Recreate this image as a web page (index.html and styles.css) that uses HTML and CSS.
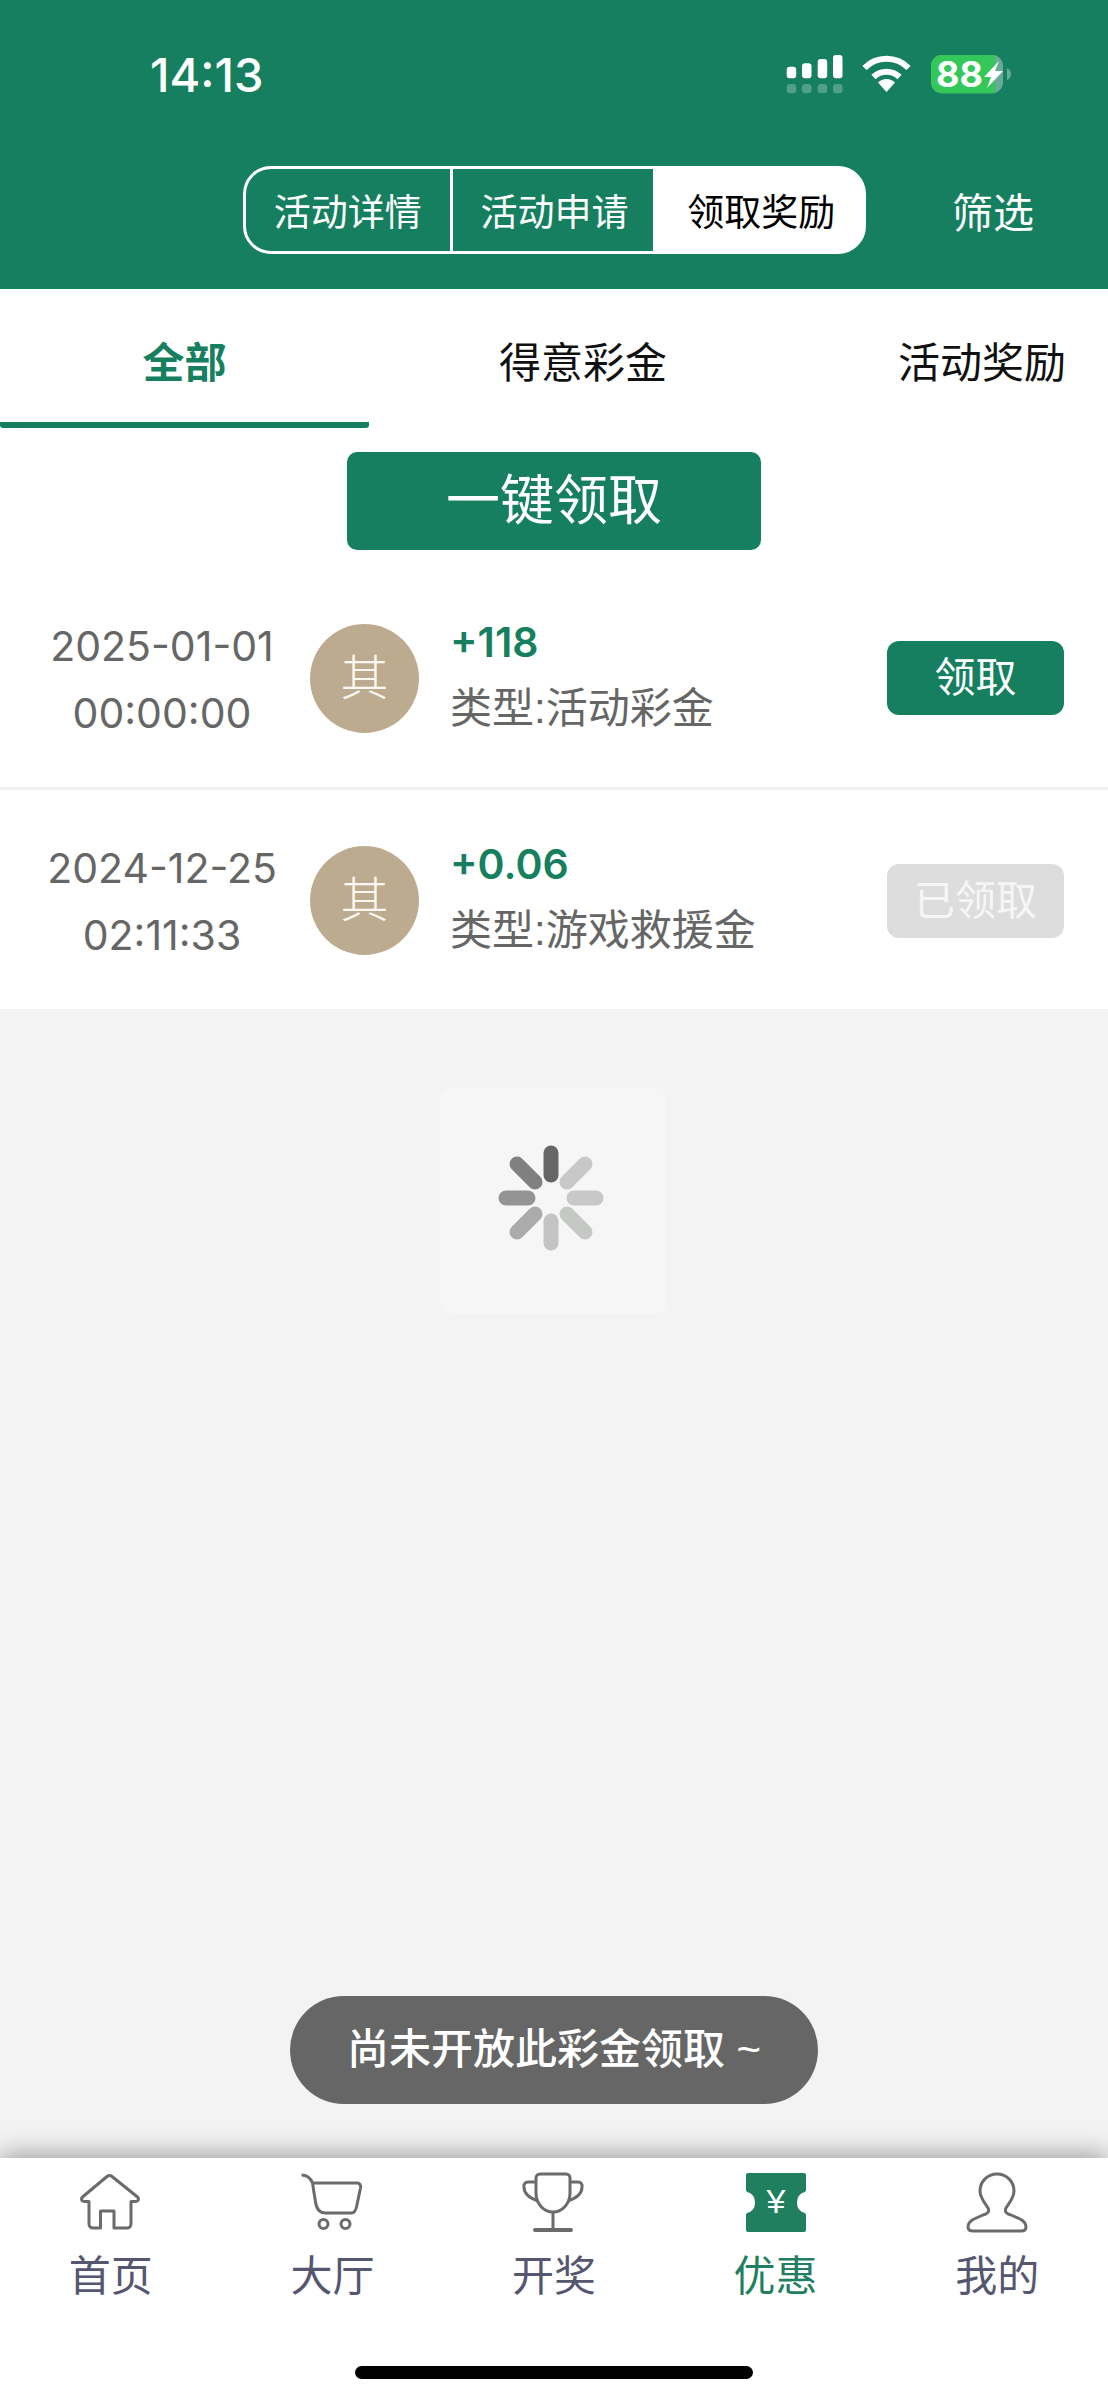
FILE: index.html
```html
<!DOCTYPE html>
<html lang="en">

<head>
    <meta charset="UTF-8">
    <title>领取奖励</title>
    <link rel="stylesheet" href="styles.css">
</head>

<body>
    <div class="page">
        <div class="header">
            <div class="status">
                <span class="time">14:13</span>
                <svg class="status-icons" viewBox="0 0 240 50" width="240" height="50">
                    <g fill="#fff">
                        <rect x="6.7" y="16.7" width="9.5" height="11.6" rx="3"></rect>
                        <rect x="22" y="13.3" width="9.5" height="15" rx="3"></rect>
                        <rect x="37.7" y="9" width="9.5" height="19.3" rx="3"></rect>
                        <rect x="53" y="5" width="9.5" height="23.3" rx="3"></rect>
                    </g>
                    <g fill="#fff" opacity="0.25">
                        <rect x="6.7" y="34" width="9.5" height="9.3" rx="3"></rect>
                        <rect x="22" y="34" width="9.5" height="9.3" rx="3"></rect>
                        <rect x="37.7" y="34" width="9.5" height="9.3" rx="3"></rect>
                        <rect x="53" y="34" width="9.5" height="9.3" rx="3"></rect>
                    </g>
                    <path d="M84.5 18A31 31 0 0 1 128.5 18M93.5 27A18.5 18.5 0 0 1 119.5 27" fill="none" stroke="#fff" stroke-width="6"></path>
                    <path d="M106.5 42L98 32.5A12 12 0 0 1 115 32.5Z" fill="#fff"></path>
                    <rect x="151" y="5" width="72" height="38.3" rx="11" fill="#fff" opacity="0.35"></rect>
                    <path d="M162 5H215V43.3H162A11 11 0 0 1 151 32.3V16A11 11 0 0 1 162 5Z" fill="#34c759"></path>
                    <path d="M227 18Q231 20 231 24Q231 28 227 30Z" fill="#fff" opacity="0.35"></path>
                    <text class="battery-num" x="156" y="37">88</text>
                    <path d="M219 11L204 27H211L207 38L223 21H215Z" fill="#fff"></path>
                </svg>
            </div>
            <div class="head-row">
                <div class="segment">
                    <div class="seg">活动详情</div>
                    <div class="seg">活动申请</div>
                    <div class="seg on">领取奖励</div>
                </div>
                <div class="filter">筛选</div>
            </div>
        </div>

        <div class="main">
            <div class="white">
                <div class="tabs">
                    <div class="tab tab1 on">全部</div>
                    <div class="tab tab2">得意彩金</div>
                    <div class="tab tab3">活动奖励</div>
                </div>
                <div class="claim-all">一键领取</div>
                <div class="row">
                    <div class="date">2025-01-01<br>00:00:00</div>
                    <div class="avatar">其</div>
                    <div class="info">
                        <div class="amount">+118</div>
                        <div class="type">类型:活动彩金</div>
                    </div>
                    <div class="btn">领取</div>
                </div>
                <div class="row last">
                    <div class="date">2024-12-25<br>02:11:33</div>
                    <div class="avatar">其</div>
                    <div class="info">
                        <div class="amount">+0.06</div>
                        <div class="type">类型:游戏救援金</div>
                    </div>
                    <div class="btn done">已领取</div>
                </div>
            </div>

            <div class="loading">
                <svg viewBox="-57 -57 120 120" width="120" height="120" fill="none" stroke-width="15" stroke-linecap="round">
                    <path d="M0 -45V-23" stroke="#666"></path>
                    <path d="M-34 -34L-16 -16" stroke="#808080"></path>
                    <path d="M-45 0H-23" stroke="#949494"></path>
                    <path d="M-34 34L-16 16" stroke="#ababab"></path>
                    <path d="M0 45V23" stroke="#c4c4c4"></path>
                    <path d="M34 34L16 16" stroke="#c6c8c6"></path>
                    <path d="M45 0H23" stroke="#c8c8c8"></path>
                    <path d="M34 -34L16 -16" stroke="#c8c8c8"></path>
                </svg>
            </div>

            <div class="toast">尚未开放此彩金领取 ~</div>
        </div>

        <div class="tabbar">
            <div class="item">
                <svg viewBox="1.500 0 70 64" width="70" height="64" class="ico">
                    <path d="M32.5 6.5a4 4 0 0 1 5 0L63 27a2.5 2.5 0 0 1-1.5 4.5H56.5V54a4 4 0 0 1-4 4H39.5V41H26V58H18.5a4 4 0 0 1-4-4V31.5H9.5A2.5 2.5 0 0 1 8 27Z"></path>
                </svg>
                <span>首页</span>
            </div>
            <div class="item">
                <svg viewBox="1.500 0 70 64" width="70" height="64" class="ico">
                    <path d="M6 5C12 5 15 8 17 13L20 32C21 39 24 43 30 43H56C59 43 60 41 61 37L65 18C65.500 15 64 13 62 13H17"></path>
                    <circle cx="28" cy="54" r="4.500"></circle>
                    <circle cx="50" cy="54" r="4.500"></circle>
                </svg>
                <span>大厅</span>
            </div>
            <div class="item">
                <svg viewBox="1 0 70 64" width="70" height="64" class="ico">
                    <path d="M22 4H48a4 4 0 0 1 4 4V23a17 19 0 0 1-34 0V8a4 4 0 0 1 4-4Z"></path>
                    <path d="M18 12H10a4 4 0 0 0-4 5C6 24 11 28 20 31M52 12H60a4 4 0 0 1 4 5C64 24 59 28 50 31M35 42V59"></path>
                    <path d="M17 60H53" stroke-width="4" stroke-linecap="round"></path>
                </svg>
                <span>开奖</span>
            </div>
            <div class="item on">
                <svg viewBox="0 0 70 64" width="70" height="64">
                    <path d="M7 3H63a2 2 0 0 1 2 2V20Q65 22 61 23Q56 26 56 32.500Q56 39 61 42Q65 43 65 45V60a2 2 0 0 1-2 2H7a2 2 0 0 1-2-2V45Q5 43 9 42Q14 39 14 32.500Q14 26 9 23Q5 22 5 20V5a2 2 0 0 1 2-2Z" fill="#1f7f5f"></path>
                    <text class="yen" x="35" y="43">¥</text>
                </svg>
                <span>优惠</span>
            </div>
            <div class="item">
                <svg viewBox="0 0 70 64" width="70" height="64" class="ico">
                    <path d="M35 4C45 4 52 12 52 21C52 28 47 33 44 38C42 42 45 44 49 45L58 49C62 51 64 54 64 57C64 60 62 61 59 61H11C8 61 6 60 6 57C6 54 8 51 12 49L21 45C25 44 28 42 26 38C23 33 18 28 18 21C18 12 25 4 35 4Z"></path>
                </svg>
                <span>我的</span>
            </div>
            <div class="home-bar"></div>
        </div>
    </div>
</body>

</html>
```

FILE: styles.css
```css
* {
    margin: 0;
    padding: 0;
    box-sizing: border-box;
}

html,
body {
    height: 100%;
    overflow: hidden;
}

body {
    font-family: "Liberation Sans", "Noto Sans CJK SC", sans-serif;
    background: #f3f3f3;
}

.page {
    height: 2400px;
    display: flex;
    flex-direction: column;
}

/* header */
.header {
    height: 289px;
    background: #167f5f;
    color: #fff;
    flex: none;
}

.status {
    height: 166px;
    display: flex;
    justify-content: space-between;
    padding: 50px 88px 0 150px;
}

.time {
    font-family: Inter, sans-serif;
    font-weight: 500;
    font-size: 47px;
    line-height: 50px;
}

.status-icons {
    display: block;
}

.battery-num {
    font-family: Inter, sans-serif;
    font-weight: 700;
    font-size: 36px;
    fill: #fff;
}

.head-row {
    display: flex;
    align-items: center;
    padding-left: 243px;
}

.segment {
    width: 623px;
    height: 88px;
    display: flex;
    border: 3px solid #fff;
    border-radius: 28px;
    background: linear-gradient(to right, transparent 66%, #fff 66%);
}

.seg {
    flex: 1;
    display: flex;
    align-items: center;
    justify-content: center;
    font-size: 37px;
    border-right: 3px solid #fff;
}

.seg.on {
    color: #000;
    border-right: 0;
}

.filter {
    margin-left: 86px;
    font-size: 41px;
}

/* content */
.main {
    flex: 1;
    position: relative;
}

.white {
    background: #fff;
}

.tabs {
    display: flex;
    height: 139px;
    overflow: hidden;
}

.tab {
    flex: none;
    display: flex;
    align-items: center;
    justify-content: center;
    padding-top: 8px;
    font-size: 42px;
    color: #111;
    border-bottom: 6px solid transparent;
}

.tab1 {
    width: 369px;
}

.tab2 {
    width: 428px;
}

.tab3 {
    width: 370px;
}

.tab.on {
    color: #167f5f;
    font-weight: 700;
    border-bottom-color: #167f5f;
    border-radius: 0 0 3px 3px;
}

.claim-all {
    width: 414px;
    height: 98px;
    margin: 24px auto 19px;
    background: #167f5f;
    border-radius: 10px;
    color: #fff;
    font-size: 54px;
    line-height: 98px;
    text-align: center;
}

.row {
    height: 221px;
    display: flex;
    align-items: center;
    border-bottom: 3px solid #f2f2f2;
}

.row.last {
    height: 219px;
    padding-top: 2px;
    border-bottom: 0;
}

.date {
    width: 260px;
    margin-left: 32px;
    padding-top: 3px;
    font-family: Inter, "Noto Sans CJK SC", sans-serif;
    font-size: 41px;
    line-height: 67px;
    text-align: center;
    color: #666;
}

.avatar {
    width: 109px;
    height: 109px;
    margin-left: 18px;
    border-radius: 50%;
    background: #bdab8f;
    color: #fbf8f2;
    font-size: 48px;
    font-weight: 300;
    line-height: 109px;
    text-align: center;
}

.info {
    margin-left: 31px;
    padding-bottom: 5px;
}

.amount {
    font-family: Inter, sans-serif;
    font-size: 41px;
    font-weight: 600;
    line-height: 52px;
    color: #167f5f;
}

.type {
    margin-top: 14px;
    font-size: 42px;
    line-height: 54px;
    color: #666;
}

.btn {
    width: 177px;
    height: 74px;
    margin-left: auto;
    margin-right: 44px;
    background: #167f5f;
    border-radius: 12px;
    color: #fff;
    font-size: 41px;
    line-height: 74px;
    text-align: center;
}

.btn.done {
    background: #ddd;
    color: #f6f6f6;
}

.loading {
    position: absolute;
    left: 440px;
    top: 798px;
    width: 227px;
    height: 227px;
    display: flex;
    align-items: center;
    justify-content: center;
    background: #f6f6f6;
    border-radius: 12px;
}

.toast {
    position: absolute;
    left: 290px;
    top: 1707px;
    width: 528px;
    height: 108px;
    background: #666;
    border-radius: 54px;
    color: #fff;
    font-size: 42px;
    font-weight: 500;
    line-height: 108px;
    text-align: center;
}

/* bottom bar */
.tabbar {
    height: 242px;
    flex: none;
    position: relative;
    display: flex;
    padding-top: 12px;
    background: #fff;
    box-shadow: 0 -2px 26px rgba(0, 0, 0, 0.4);
}

.item {
    width: 20%;
    display: flex;
    flex-direction: column;
    align-items: center;
    font-size: 42px;
    color: #55566f;
}

.item span {
    margin-top: 17px;
    line-height: 52px;
}

.item.on {
    color: #1f7f5f;
}

.ico {
    fill: none;
    stroke: #6b6b6b;
    stroke-width: 3;
    stroke-linejoin: round;
}

.yen {
    font-family: "Liberation Sans", sans-serif;
    font-size: 34px;
    text-anchor: middle;
    fill: #fff;
}

.home-bar {
    position: absolute;
    left: 355px;
    bottom: 21px;
    width: 398px;
    height: 13px;
    background: #000;
    border-radius: 7px;
}
```
